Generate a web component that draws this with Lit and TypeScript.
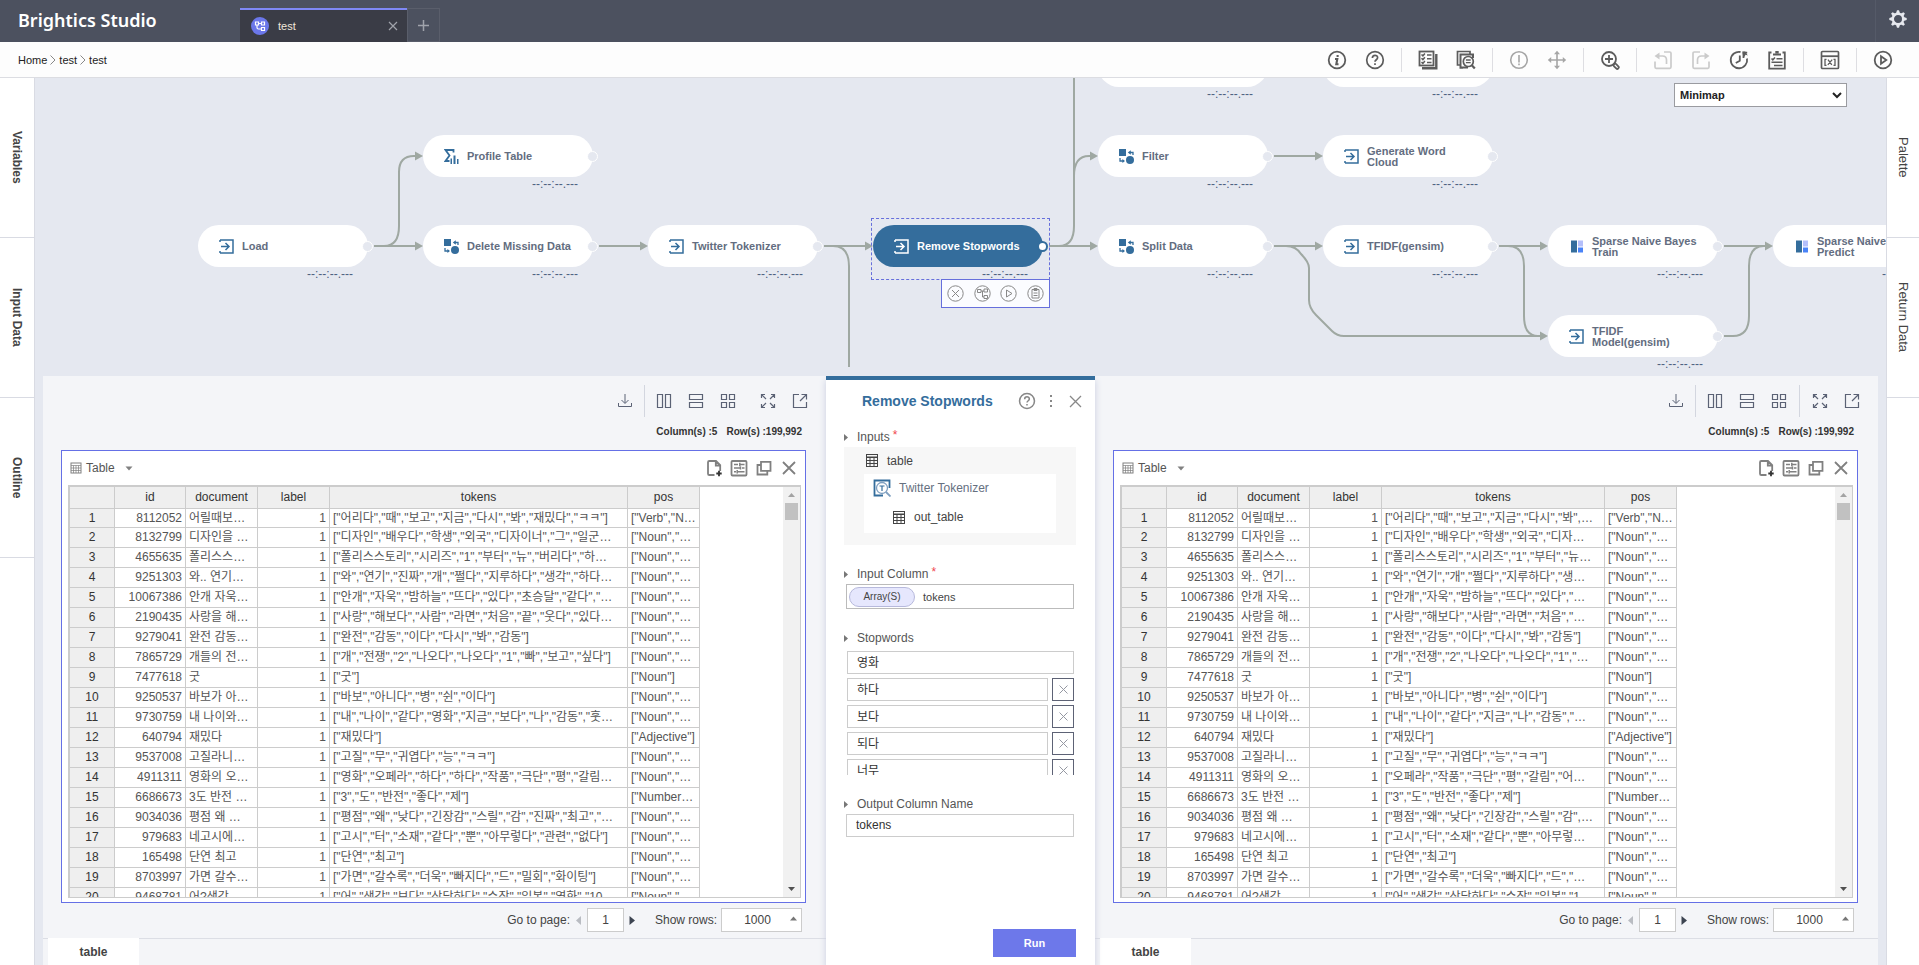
import { LitElement, html, svg, css } from "lit";
import { customElement, property } from "lit/decorators.js";
import { classMap } from "lit/directives/class-map.js";

const base = css`
  *, *::before, *::after { box-sizing: border-box; }
  button, input, select { font: inherit; color: inherit; margin: 0; padding: 0; border: 0; background: none; border-radius: 0; }
  button { cursor: pointer; display: inline-flex; align-items: center; justify-content: center; }
  svg { display: block; flex: none; }
`;

const line = "fill:none;stroke:currentColor";

const icons = {
  info: svg`<g fill="none" stroke="currentColor" stroke-width="1.8"><circle cx="10" cy="10" r="8.3"/><path d="M10.6 5v2M8 9h2.3l-1 5.2h2.2" stroke-width="2.1"/></g>`,
  help: svg`<g fill="none" stroke="currentColor" stroke-width="1.7"><circle cx="10" cy="10" r="8.3"/><path d="M7.4 8c0-3.6 5.3-3.4 5.2-.2 0 1.9-2.6 2-2.6 4M10 13.2v1.8"/></g>`,
  checklist: svg`<g fill="none" stroke="currentColor" stroke-width="1.8"><rect x="1.5" y="1.5" width="14" height="14"/><path d="M4 18.3h14.3V4" stroke-width="2.4"/><path d="M3.5 4.5l1.4 1.3 2-2.3M3.5 8.3l1.4 1.3 2-2.3M3.5 12.1l1.4 1.3 2-2.3M9 5h4.500M9 8.800h4.500M9 12.600h4.500" stroke-width="1.5"/></g>`,
  search: svg`<g fill="none" stroke="currentColor" stroke-width="1.7"><path d="M4 15H1.500V1.500H14V4"/><path d="M7 17.800H4.500V4.500H17V8M4.500 17.500H12" stroke-width="2"/><circle cx="12.300" cy="11.500" r="5"/><path d="M15.800 15.200l3 3.300" stroke-width="2.200"/><path d="M9.900 10h4.800M9.900 12.600h4.800" stroke-width="1.400"/></g>`,
  alert: svg`<g fill="none" stroke="currentColor" stroke-width="1.600"><circle cx="10" cy="10" r="8.300"/><path d="M10 5v7.600M10 13.600v1.600"/></g>`,
  move: svg`<g fill="none" stroke="currentColor" stroke-width="1.600"><path d="M10 2v16M2 10h16"/></g><path fill="currentColor" d="M10 .8l3 3.400H7zM10 19.200l3-3.400H7zM.8 10l3.400-3v6zM19.200 10l-3.400-3v6z"/>`,
  zoom: svg`<g fill="none" stroke="currentColor" stroke-width="1.800"><circle cx="9" cy="9" r="7"/><path d="M5 9h8M9 5v8"/><rect x="13.200" y="14.800" width="6" height="3" rx="1.500" transform="rotate(45 16.200 16.300)"/></g>`,
  undo: svg`<g fill="none" stroke="currentColor" stroke-width="1.700"><path d="M2 11.500v5.600q0 1.200 1.200 1.200h13.600q1.200 0 1.200-1.200V3.200Q18 2 16.800 2H11"/><path d="M4 6h5.500q4 0 4 4v4"/></g><path fill="currentColor" d="M1.500 6L6.500 2.400v7.200z"/>`,
  redo: svg`<g fill="none" stroke="currentColor" stroke-width="1.700"><path d="M18 11.500v5.600q0 1.200-1.200 1.200H3.200Q2 18.300 2 17.100V3.200Q2 2 3.200 2H9"/><path d="M16 6h-5.500q-4 0-4 4v4"/></g><path fill="currentColor" d="M18.500 6l-5-3.600v7.200z"/>`,
  history: svg`<g fill="none" stroke="currentColor" stroke-width="1.800"><path d="M11.500 2A8.200 8.200 0 1 0 18 8.500"/><path d="M10.800 5.500v5.300l-4 2.200M14.500 8V2.600M14 2.600h4.200"/></g><path fill="currentColor" d="M13.200 1.400h3l2.600 4-2.200-.6-2 3z"/>`,
  clipboard: svg`<g fill="none" stroke="currentColor" stroke-width="1.800"><path d="M4.500 2.500H2.200v16.200h15.600V2.500h-2.300"/><path d="M6 4.500h8" stroke-width="2"/><path d="M8.300 2.300h3.400" stroke-width="2.600"/><path d="M4.500 8.500l1.300 1.300 2.200-2.400M9.500 8.800h6M4.500 12.200h11M7 15.500h8.500" stroke-width="1.500"/></g>`,
  variable: svg`<g fill="none" stroke="currentColor" stroke-width="1.700"><rect x="1.500" y="1.500" width="17" height="17" rx="1"/><path d="M1.500 6.200h17" stroke-width="1.800"/><path d="M6.500 9.300H5v6h1.500M13.500 9.300H15v6h-1.500M8 9.700l3.800 5.200M12.200 9.700L7.800 14.900" stroke-width="1.300"/></g>`,
  play: svg`<g fill="none" stroke="currentColor" stroke-width="1.800"><circle cx="10" cy="10" r="8.300"/><path d="M8 6.200v7.600l5.300-3.800z"/></g>`,
};

const toolIcons = {
  download: svg`<path style=${line} d="M2.5 11v3.500h13V11M9 2v9M5.500 8L9 11.500 12.500 8"/>`,
  cols: svg`<path style=${line} d="M2.500 2.500h5v13h-5zM10.500 2.500h5v13h-5z" stroke-width="1.200"/>`,
  rows: svg`<path style=${line} d="M2.500 2.500h13v5h-13zM2.500 10.500h13v5h-13z" stroke-width="1.200"/>`,
  grid: svg`<path style=${line} d="M2.500 2.500h5v5h-5zM10.500 2.500h5v5h-5zM2.500 10.500h5v5h-5zM10.500 10.500h5v5h-5z" stroke-width="1.200"/>`,
  expand: svg`<path style=${line} d="M7 7L2.500 2.500M2.500 6V2.500H6M11 7l4.500-4.500M12 2.500h3.500V6M7 11l-4.500 4.500M2.500 12v3.500H6M11 11l4.500 4.500M15.500 12v3.500H12" stroke-width="1.200"/>`,
  popout: svg`<path style=${line} d="M8 2.500H2.500v13h13V10M9 9l6.500-6.500M10.500 2.500h5v5" stroke-width="1.200"/>`,
};

const glyphSheet = svg`<g fill="none" stroke="currentColor"><rect x="1" y="1" width="10" height="10"/><path d="M1 3.500h10M1 6h10M1 8.500h10M3.500 3.500V11M6 3.500V11M8.500 3.500V11" stroke-width=".7"/></g>`;
const glyphTable = svg`<rect x=".5" y=".5" width="11" height="12" fill="none" stroke="currentColor"/><path fill="none" stroke="currentColor" d="M1 3.500h10M1 6.500h10M1 9.500h10M4 3.500V12M8 3.500V12"/><path fill="currentColor" d="M.5 2.500h11v1.500H.5z"/>`;

type Row = [string, string, string, string];

const shared: [string, string, string][] = [
  ["8112052", "어릴때보…", '["Verb","N…'],
  ["8132799", "디자인을 …", '["Noun","…'],
  ["4655635", "폴리스스…", '["Noun","…'],
  ["9251303", "와.. 연기…", '["Noun","…'],
  ["10067386", "안개 자욱…", '["Noun","…'],
  ["2190435", "사랑을 해…", '["Noun","…'],
  ["9279041", "완전 감동…", '["Noun","…'],
  ["7865729", "개들의 전…", '["Noun","…'],
  ["7477618", "굿", '["Noun"]'],
  ["9250537", "바보가 아…", '["Noun","…'],
  ["9730759", "내 나이와…", '["Noun","…'],
  ["640794", "재밌다", '["Adjective"]'],
  ["9537008", "고질라니…", '["Noun","…'],
  ["4911311", "영화의 오…", '["Noun","…'],
  ["6686673", "3도 반전 …", '["Number…'],
  ["9034036", "평점 왜 …", '["Noun","…'],
  ["979683", "네고시에…", '["Noun","…'],
  ["165498", "단연 최고", '["Noun","…'],
  ["8703997", "가면 갈수…", '["Noun","…'],
  ["9468781", "어?생각…", '["Noun","…'],
];

const inputTokens = [
  '["어리다","때","보고","지금","다시","봐","재밌다","ㅋㅋ"]',
  '["디자인","배우다","학생","외국","디자이너","그","일군…',
  '["폴리스스토리","시리즈","1","부터","뉴","버리다","하…',
  '["와","연기","진짜","개","쩔다","지루하다","생각","하다…',
  '["안개","자욱","밤하늘","뜨다","있다","초승달","같다","…',
  '["사랑","해보다","사람","라면","처음","끝","웃다","있다…',
  '["완전","감동","이다","다시","봐","감동"]',
  '["개","전쟁","2","나오다","나오다","1","빠","보고","싶다"]',
  '["굿"]',
  '["바보","아니다","병","쉰","이다"]',
  '["내","나이","같다","영화","지금","보다","나","감동","훗…',
  '["재밌다"]',
  '["고질","무","귀엽다","능","ㅋㅋ"]',
  '["영화","오페라","하다","하다","작품","극단","평","갈림…',
  '["3","도","반전","좋다","제"]',
  '["평점","왜","낮다","긴장감","스릴","감","진짜","최고","…',
  '["고시","터","소재","같다","뿐","아무렇다","관련","없다"]',
  '["단연","최고"]',
  '["가면","갈수록","더욱","빠지다","드","밀회","화이팅"]',
  '["어","생각","보다","상당하다","수작","일본","영화","10…',
];

const outputTokens = [
  '["어리다","때","보고","지금","다시","봐",…',
  '["디자인","배우다","학생","외국","디자…',
  '["폴리스스토리","시리즈","1","부터","뉴…',
  '["와","연기","개","쩔다","지루하다","생…',
  '["안개","자욱","밤하늘","뜨다","있다","…',
  '["사랑","해보다","사람","라면","처음","…',
  '["완전","감동","이다","다시","봐","감동"]',
  '["개","전쟁","2","나오다","나오다","1","…',
  '["굿"]',
  '["바보","아니다","병","쉰","이다"]',
  '["내","나이","같다","지금","나","감동","…',
  '["재밌다"]',
  '["고질","무","귀엽다","능","ㅋㅋ"]',
  '["오페라","작품","극단","평","갈림","어…',
  '["3","도","반전","좋다","제"]',
  '["평점","왜","낮다","긴장감","스릴","감",…',
  '["고시","터","소재","같다","뿐","아무렇…',
  '["단연","최고"]',
  '["가면","갈수록","더욱","빠지다","드","…',
  '["어","생각","상당하다","수작","일본","1…',
];

const toRows = (tokens: string[]): Row[] => shared.map(([id, doc, pos], i) => [id, doc, tokens[i], pos]);

@customElement("data-panel")
export class DataPanel extends LitElement {
  @property({ attribute: false }) rows: Row[] = [];
  @property({ type: Boolean }) narrow = false;

  static styles = [
    base,
    css`
      :host { display: flex; flex-direction: column; min-width: 0; min-height: 0; background: #f4f5f8; color: #444; }
      .tools { display: flex; justify-content: flex-end; align-items: center; height: 50px; padding-right: 10px; color: #5b6275; }
      .tools button { width: 32px; height: 32px; }
      .sep { width: 1px; height: 32px; background: #d3d6df; margin: 0 4px; }
      .first { margin: 0 3px; }
      .gap { width: 8px; }
      .counts { display: flex; justify-content: flex-end; gap: 9px; height: 12px; line-height: 12px; padding-right: 24px; font-size: 10px; font-weight: 700; color: #333; }
      .card { flex: 1; min-height: 0; display: flex; flex-direction: column; margin: 12px 20px 0 18px; border: 1px solid #6570e6; background: #fff; padding: 0 4px 4px 6px; }
      .head { display: flex; align-items: center; height: 34px; padding-left: 2px; color: #808080; }
      .kind { display: flex; align-items: center; gap: 4px; color: #808080; }
      .kind span { color: #555; margin-right: 6px; }
      .spacer { flex: 1; }
      .head .act { width: 25px; height: 25px; }
      .grid { flex: 1; min-height: 0; display: flex; justify-content: space-between; overflow: hidden; border: 1px solid #ccc; border-width: 2px 1px 1px 2px; }
      table { table-layout: fixed; border-collapse: separate; border-spacing: 0; width: 630px; height: 0; }
      table.narrow { width: 555px; }
      .c0 { width: 45px; }
      .c1 { width: 71px; }
      .c2, .c3, .c5 { width: 72px; }
      th, td { border-right: 1px solid #ccc; border-bottom: 1px solid #ccc; padding: 0 3px; height: 20px; line-height: 19px; font-weight: 400; white-space: nowrap; overflow: hidden; }
      thead th { height: 22px; line-height: 21px; }
      tbody tr:first-child > * { height: 19px; line-height: 18px; }
      th { background: #efefef; color: #333; text-align: center; }
      td { color: #555; }
      td.num { text-align: right; }
      .bar { width: 17px; display: flex; flex-direction: column; align-items: center; background: #f1f1f1; }
      .arrow { height: 16px; display: flex; align-items: center; color: #a3a3a3; }
      .thumb { width: 13px; height: 17px; background: #c1c1c1; }
      .arrow.down { margin-top: auto; color: #505050; }
      .pager { display: flex; justify-content: flex-end; align-items: center; height: 35px; padding: 0 24px 1px 0; }
      .pager label { line-height: 24px; }
      .page { width: 37px; height: 24px; border: 1px solid #ccc; background: #fff; text-align: center; }
      .pager button { height: 24px; }
      .prev { width: 17px; color: #b9bcc2; }
      .next { width: 17px; margin-right: 14px; color: #3d4451; }
      .pick { position: relative; margin-left: 4px; }
      .pick select { display: block; appearance: none; width: 81px; height: 24px; border: 1px solid #ccc; background: #fff; text-align: center; text-align-last: center; padding-right: 8px; }
      .pick svg { position: absolute; right: 5px; top: 8px; color: #777; pointer-events: none; }
      .tabs { display: flex; height: 27px; padding-left: 5px; box-shadow: inset 0 1px 0 #dcdee5; }
      .tabs button { width: 91px; background: #fff; font-weight: 700; }
    `,
  ];

  private tool(label: string, glyph: unknown) {
    return html`<button aria-label=${label}><svg width="18" height="18" viewBox="0 0 18 18">${glyph}</svg></button>`;
  }

  render() {
    return html`
      <div class="tools">
        ${this.tool("Download", toolIcons.download)}
        <span class="sep first"></span>
        ${this.tool("Split columns", toolIcons.cols)} ${this.tool("Split rows", toolIcons.rows)} ${this.tool("Split grid", toolIcons.grid)}
        ${this.narrow ? html`<span class="sep"></span>` : html`<span class="gap"></span>`}
        ${this.tool("Expand", toolIcons.expand)} ${this.tool("Pop out", toolIcons.popout)}
      </div>
      <div class="counts"><span>Column(s) :5</span><span>Row(s) :199,992</span></div>
      <section class="card">
        <div class="head">
          <button class="kind">
            <svg width="12" height="12" viewBox="0 0 12 12">${glyphSheet}</svg>
            <span>Table</span>
            <svg width="8" height="5" viewBox="0 0 8 5"><path fill="currentColor" d="M.5.5h7L4 4.500z"/></svg>
          </button>
          <span class="spacer"></span>
          <button class="act" aria-label="Add report"><svg width="18" height="18" viewBox="0 0 18 18"><path style=${line} stroke-width="1.800" d="M9.500 16H4.300Q3 16 3 14.700V3.300Q3 2 4.300 2H11l4.200 4.200V12M10.800 2.200V6.500H15"/><path stroke="#333" stroke-width="1.800" d="M14 11.800v5.400M11.300 14.500h5.400"/></svg></button>
          <button class="act" aria-label="Settings"><svg width="18" height="18" viewBox="0 0 18 18"><rect x="1.500" y="2" width="15" height="14.500" rx="1" style=${line} stroke-width="1.800"/><path style=${line} stroke-width="1.500" d="M4 5.500h4M10 5.500h4.500M4 9h6M12 9h2.500M4 12.800h2M8 12.800h6.500M9.800 3.800v3.400M10.500 7.500v3M7.200 11v3.500"/></svg></button>
          <button class="act" aria-label="Copy"><svg width="18" height="18" viewBox="0 0 18 18"><path style=${line} stroke-width="1.800" d="M6 2.800h9.500v9H6zM6 6H2.500v9.500h9.800v-3.500"/></svg></button>
          <button class="act" aria-label="Close"><svg width="14" height="14" viewBox="0 0 14 14"><path style=${line} stroke-width="1.800" d="M1 1l12 12M13 1L1 13"/></svg></button>
        </div>
        <div class="grid">
          <table class=${classMap({ narrow: this.narrow })}>
            <colgroup><col class="c0" /><col class="c1" /><col class="c2" /><col class="c3" /><col /><col class="c5" /></colgroup>
            <thead>
              <tr><th></th><th>id</th><th>document</th><th>label</th><th>tokens</th><th>pos</th></tr>
            </thead>
            <tbody>
              ${this.rows.map(
                ([id, doc, tokens, pos], i) => html`<tr><th>${i + 1}</th><td class="num">${id}</td><td>${doc}</td><td class="num">1</td><td>${tokens}</td><td>${pos}</td></tr>`
              )}
            </tbody>
          </table>
          <div class="bar" aria-hidden="true">
            <span class="arrow"><svg width="7" height="4" viewBox="0 0 7 4"><path fill="currentColor" d="M0 4h7L3.500 0z"/></svg></span>
            <span class="thumb"></span>
            <span class="arrow down"><svg width="7" height="4" viewBox="0 0 7 4"><path fill="currentColor" d="M0 0h7L3.500 4z"/></svg></span>
          </div>
        </div>
      </section>
      <div class="pager">
        <label for="page">Go to page:</label>
        <button class="prev" aria-label="Previous page"><svg width="5" height="9" viewBox="0 0 5 9"><path fill="currentColor" d="M5 0v9L0 4.500z"/></svg></button>
        <input class="page" id="page" value="1" />
        <button class="next" aria-label="Next page"><svg width="6" height="9" viewBox="0 0 6 9"><path fill="currentColor" d="M.5 0v9L6 4.500z"/></svg></button>
        <label for="rows">Show rows:</label>
        <span class="pick">
          <select id="rows"><option>1000</option></select>
          <svg width="7" height="5" viewBox="0 0 7 5"><path fill="currentColor" d="M0 4.500h7L3.500.5z"/></svg>
        </span>
      </div>
      <div class="tabs"><button>table</button></div>
    `;
  }
}

@customElement("config-panel")
export class ConfigPanel extends LitElement {
  static styles = [
    base,
    css`
      :host { position: relative; z-index: 1; display: flex; flex-direction: column; min-height: 0; background: #fff; border-top: 4px solid #346d9c; box-shadow: 0 4px 7px #c9cee0; clip-path: inset(0 -10px 0 -10px); color: #444; }
      header { display: flex; align-items: center; height: 42px; padding: 0 8px 0 36px; color: #888; }
      h2 { flex: 1; margin: 0; font-size: 14px; line-height: 20px; color: #346d9c; white-space: nowrap; }
      header button { width: 24px; height: 24px; }
      .body { flex: 1; min-height: 0; display: flex; flex-direction: column; padding: 5px 19px 8px 18px; }
      section { margin-bottom: 19px; }
      .label { display: flex; align-items: center; height: 20px; gap: 9px; color: #555; }
      .label svg { color: #777; }
      .req { color: #f0484f; align-self: flex-start; margin-left: -6px; font-size: 12px; line-height: 16px; }
      .source { background: #f7f7f7; padding: 0 20px 12px; color: #444; }
      .entry { display: flex; align-items: center; gap: 9px; height: 27px; padding-left: 2px; }
      .inner { background: #fff; height: 59px; padding-left: 9px; }
      .entry.fn { color: #66707f; padding: 0; gap: 8px; }
      .entry.out { padding: 0 0 0 20px; height: 32px; }
      .field { display: flex; align-items: center; margin: 0 2px; border: 1px solid #bbb; height: 25px; background: #fff; padding: 0 2px; font-size: 11px; }
      .pill { width: 66px; height: 20px; display: flex; align-items: center; justify-content: center; margin-right: 8px; border: 1px solid #b7b9dc; border-radius: 10px; background: #e6e7fd; font-size: 10px; }
      .list { height: 127px; overflow: hidden; display: flex; flex-direction: column; gap: 4px; padding: 3px 2px 0 3px; }
      .item { display: flex; gap: 4px; flex: none; }
      input { flex: 1; min-width: 0; height: 23px; border: 1px solid #ccc; background: #fff; padding: 0 9px 2px; color: #333; }
      .item button { width: 22px; height: 23px; border: 1px solid #5d6275; color: #9598a2; }
      .single { display: flex; margin: 0 2px; }
      .run { align-self: flex-end; margin-top: auto; width: 83px; height: 28px; background: #6d78ea; color: #fff; font-size: 11px; font-weight: 700; }
    `,
  ];

  private marker = html`<svg width="4" height="7" viewBox="0 0 4 7"><path fill="currentColor" d="M0 0v7l4-3.500z"/></svg>`;

  render() {
    const words = ["하다", "보다", "되다", "너무"];
    return html`
      <header>
        <h2>Remove Stopwords</h2>
        <button aria-label="Help"><svg width="18" height="18" viewBox="0 0 20 20">${icons.help}</svg></button>
        <button aria-label="More"><svg width="4" height="14" viewBox="0 0 4 14"><path fill="currentColor" d="M1 1h2v2H1zM1 6h2v2H1zM1 11h2v2H1z"/></svg></button>
        <button aria-label="Close"><svg width="13" height="13" viewBox="0 0 13 13"><path style=${line} stroke-width="1.300" d="M1 1l11 11M12 1L1 12"/></svg></button>
      </header>
      <div class="body">
        <section>
          <div class="label">${this.marker}<span>Inputs</span><span class="req">*</span></div>
          <div class="source">
            <div class="entry"><svg width="12" height="13" viewBox="0 0 12 13">${glyphTable}</svg>table</div>
            <div class="inner">
              <div class="entry fn">
                <svg width="18" height="18" viewBox="0 0 18 18"><path fill="none" stroke="#346d9c" stroke-width="1.800" d="M16.500 9V1.500h-15v15H10"/><circle cx="9" cy="9" r="5.500" fill="none" stroke="#7f9fc0" stroke-width="1.300"/><path fill="none" stroke="#346d9c" stroke-width="1.200" d="M6.500 7h5M9 7v5"/><path stroke="#7f9fc0" stroke-width="1.800" d="M13 13l4.500 4.500"/></svg>
                Twitter Tokenizer
              </div>
              <div class="entry out"><svg width="12" height="13" viewBox="0 0 12 13">${glyphTable}</svg>out_table</div>
            </div>
          </div>
        </section>
        <section>
          <div class="label">${this.marker}<span>Input Column</span><span class="req">*</span></div>
          <div class="field"><span class="pill">Array(S)</span>tokens</div>
        </section>
        <section>
          <label class="label" for="word">${this.marker}Stopwords</label>
          <div class="list">
            <div class="item"><input id="word" value="영화" /></div>
            ${words.map(
              (w) => html`<div class="item"><input aria-label="Stopword" value=${w} /><button aria-label="Remove"><svg width="9" height="9" viewBox="0 0 9 9"><path style=${line} d="M.5.5l8 8M8.500.5l-8 8"/></svg></button></div>`
            )}
          </div>
        </section>
        <section>
          <label class="label" for="out">${this.marker}Output Column Name</label>
          <div class="single"><input id="out" value="tokens" /></div>
        </section>
        <button class="run">Run</button>
      </div>
    `;
  }
}

type Kind = "step" | "shape" | "stats" | "model";
interface FlowNode { col: number; row: number; kind: Kind; text: string[]; selected?: boolean; }

const flow: FlowNode[] = [
  { col: 4, row: -1, kind: "shape", text: [] },
  { col: 5, row: -1, kind: "shape", text: [] },
  { col: 1, row: 0, kind: "stats", text: ["Profile Table"] },
  { col: 4, row: 0, kind: "shape", text: ["Filter"] },
  { col: 5, row: 0, kind: "step", text: ["Generate Word", "Cloud"] },
  { col: 0, row: 1, kind: "step", text: ["Load"] },
  { col: 1, row: 1, kind: "shape", text: ["Delete Missing Data"] },
  { col: 2, row: 1, kind: "step", text: ["Twitter Tokenizer"] },
  { col: 3, row: 1, kind: "step", text: ["Remove Stopwords"], selected: true },
  { col: 4, row: 1, kind: "shape", text: ["Split Data"] },
  { col: 5, row: 1, kind: "step", text: ["TFIDF(gensim)"] },
  { col: 6, row: 1, kind: "model", text: ["Sparse Naive Bayes", "Train"] },
  { col: 7, row: 1, kind: "model", text: ["Sparse Naive Bayes", "Predict"] },
  { col: 6, row: 2, kind: "step", text: ["TFIDF", "Model(gensim)"] },
];

const kindIcons: Record<Kind, unknown> = {
  step: svg`<path fill="none" stroke="currentColor" stroke-width="1.500" d="M1 1h13v13H1M1 1v2M1 12v2M2 7.500h7.500M6.500 4l3.500 3.500L6.500 11"/>`,
  shape: svg`<path fill="currentColor" d="M0 0h7v7H0z"/><circle cx="11" cy="11" r="4" fill="currentColor"/><path fill="none" stroke="currentColor" stroke-width="1.300" d="M14 6V3.500h-3.500M1 9v3h4"/><path fill="currentColor" d="M8.800 3.500l3-2.200v4.400zM6 12l-2.600-2v4z"/>`,
  stats: svg`<path fill="none" stroke="currentColor" stroke-width="1.800" d="M9.500 3.500V1H1.500l4 5.500-4 5.500h4"/><path fill="currentColor" d="M6.500 9.500H8V15H6.500zM9.500 6.500h2V15h-2zM13 10h1.500v5H13z"/>`,
  model: svg`<path fill="#346d9c" d="M2 1.500h6v12H2z"/><path fill="#b4bffb" d="M9 1.500h5v6H9z"/><path fill="#4a83f7" d="M9 8.500h5v5H9z"/>`,
};

const wires = [
  "M374 246H416", "M384 246Q399 246 399 226V172Q399 156 414 156H416",
  "M599 246H641", "M824 246H866", "M833 246Q849 246 849 266V367",
  "M1049 246H1091", "M1059 246Q1074 246 1074 226V78", "M1074 176Q1074 156 1089 156H1091",
  "M1274 156H1316", "M1274 246H1316", "M1281 246H1286Q1296 246 1301 254 1309 262 1309 268V300Q1309 308 1316 315L1332 331Q1337 336 1344 336H1541",
  "M1499 246H1541", "M1508 246Q1524 246 1524 266V316Q1524 336 1538 336",
  "M1724 246H1766", "M1724 336H1733Q1749 336 1749 316V266Q1749 246 1764 246",
];
const heads = [[424, 246], [424, 156], [649, 246], [874, 246], [1099, 246], [1099, 156], [1324, 156], [1324, 246], [1549, 336], [1549, 246], [1774, 246]];

@customElement("flow-canvas")
export class FlowCanvas extends LitElement {
  static styles = [
    base,
    css`
      :host { position: relative; display: block; overflow: hidden; }
      .wires { position: absolute; inset: 0; width: 100%; height: 100%; }
      .node { position: absolute; width: 170px; height: 42px; display: flex; align-items: center; gap: 8px; padding-left: 21px; border-radius: 21px; background: #fff; color: #346d9c; font-size: 11px; font-weight: 700; line-height: 11px; }
      .text { color: #636d80; white-space: nowrap; padding-top: 1px; }
      .port { position: absolute; right: -5px; top: 16px; width: 11px; height: 11px; border: 1px solid #fff; border-radius: 50%; background: #e5e8f0; }
      .time { position: absolute; right: 15px; top: 43px; font-size: 12px; font-weight: 400; line-height: 12px; color: #4d6080; }
      .on { background: #346d9c; color: #fff; }
      .on .text { color: #fff; }
      .on .port { border: 2px solid #346d9c; background: #fff; }
      .frame { position: absolute; left: 836px; top: 140px; width: 179px; height: 62px; border: 1px dashed #666fdc; }
      .menu { position: absolute; left: 906px; top: 201px; width: 109px; height: 29px; display: flex; justify-content: center; align-items: center; border: 1px solid #666fdc; background: #fbfcff; color: #888; }
      .menu button { flex: 1; }
      .map { position: absolute; right: 39px; top: 5px; width: 173px; height: 24px; }
      .map select { appearance: none; width: 100%; height: 100%; border: 1px dashed #222; background: #fff; padding: 0 5px; font-size: 11px; font-weight: 700; color: #222; outline: 1px solid #9a9ba0; outline-offset: -1px; }
      .map svg { position: absolute; right: 5px; top: 9px; pointer-events: none; }
    `,
  ];

  render() {
    const ring = svg`<circle cx="8.500" cy="8.500" r="7.700" style=${line}/>`;
    return html`
      <svg class="wires">
        <g transform="translate(-35 -78)">
          ${wires.map((d) => svg`<path d=${d} fill="none" stroke="#9fa8a2" stroke-width="2"/>`)}
          ${heads.map(([x, y]) => svg`<path d=${`M${x - 9} ${y - 4.5}L${x - 1} ${y}L${x - 9} ${y + 4.5}z`} fill="#9fa8a2"/>`)}
        </g>
      </svg>
      <div class="frame"></div>
      ${flow.map(
        (n) => html`
          <div class=${classMap({ node: true, on: !!n.selected })} style=${`left:${163 + n.col * 225}px;top:${57 + n.row * 90}px`}>
            <svg width="15" height="15" viewBox="0 0 15 15">${kindIcons[n.kind]}</svg>
            <span class="text">${n.text.map((t, i) => (i ? html`<br />${t}` : t))}</span>
            <span class="port"></span>
            <span class="time">--:--:--.---</span>
          </div>
        `
      )}
      <div class="menu">
        <button aria-label="Delete"><svg width="17" height="17" viewBox="0 0 17 17">${ring}<path style=${line} d="M5 5l7 7M12 5l-7 7"/></svg></button>
        <button aria-label="Connect"><svg width="17" height="17" viewBox="0 0 17 17">${ring}<path style=${line} d="M3.500 4.500h3.500v3H3.500zM10 4h3.500v3H10zM10 10.500h3.500v3H10zM7 6h3M8.500 6v6H10"/></svg></button>
        <button aria-label="Run"><svg width="17" height="17" viewBox="0 0 17 17">${ring}<path style=${line} d="M6.500 5v7l5.500-3.500z"/></svg></button>
        <button aria-label="Report"><svg width="17" height="17" viewBox="0 0 17 17">${ring}<path style=${line} d="M5 4.500h7v8.500H5zM7 3.500h3v2H7zM6.500 8h4M6.500 10.500h4"/></svg></button>
      </div>
      <div class="map">
        <select aria-label="Canvas view"><option>Minimap</option></select>
        <svg width="10" height="7" viewBox="0 0 10 7"><path fill="none" stroke="#222" stroke-width="2" d="M1 1l4 4 4-4"/></svg>
      </div>
    `;
  }
}

@customElement("app-root")
export class AppRoot extends LitElement {
  static styles = [
    base,
    css`
      :host { display: flex; flex-direction: column; height: 100vh; overflow: hidden; font-family: "Liberation Sans", Arial, "Noto Sans CJK KR", sans-serif; font-size: 12px; color: #333; background: #e5e8f0; }
      .top { display: flex; align-items: flex-end; height: 42px; flex: none; background: #4c515f; color: #fff; }
      .logo { width: 240px; align-self: center; padding: 0 0 3px 18px; font-family: "Noto Sans", sans-serif; font-size: 18px; line-height: 24px; font-weight: 600; }
      .tab { display: flex; align-items: center; width: 167px; height: 34px; padding: 0 9px 0 11px; border-top: 2px solid #7f88f5; background: #3a3c46; font-size: 11px; color: #f2e8dc; }
      .tab span { flex: 1; padding-left: 9px; }
      .add { width: 33px; height: 34px; border: 1px solid #5a5e6b; color: #a0a3ab; }
      .gear { margin-left: auto; width: 44px; height: 42px; border-left: 1px solid #555a68; padding-bottom: 5px; color: #e6e8ee; }
      .sub { display: flex; align-items: center; height: 36px; flex: none; padding: 0 17px 0 18px; background: #fdfdfd; border-bottom: 1px solid #dcdde2; }
      nav { display: flex; align-items: center; flex: 1; font-size: 11px; color: #888; }
      nav a { color: #222; text-decoration: none; }
      nav svg { margin: 0 3px; }
      .sub button { width: 38px; height: 34px; color: #5c5c5c; }
      .sub .dim { color: #a6a6a6; }
      .sub .off { color: #cbcbcb; }
      .sep { width: 1px; height: 24px; background: #dedee2; margin: 0 7px; }
      .main { flex: 1; min-height: 0; display: grid; grid-template-columns: 35px minmax(0, 1fr) 33px; }
      aside { background: #fff; border-right: 1px solid #d9dbe3; }
      aside.right { border: 0; border-left: 1px solid #d9dbe3; }
      aside button { display: flex; width: 100%; height: 160px; border-bottom: 1px solid #d9dbe3; writing-mode: vertical-rl; font-weight: 700; color: #444; }
      aside.right button { font-weight: 400; font-size: 13px; }
      .work { display: grid; grid-template-rows: 298px minmax(0, 1fr); min-height: 0; }
      .panels { display: grid; grid-template-columns: minmax(0, 1fr) 269px minmax(0, 1fr); min-height: 0; padding: 0 8px; }
    `,
  ];

  private tool(label: string, glyph: unknown, cls = "") {
    return html`<button class=${cls} aria-label=${label}><svg width="20" height="20" viewBox="0 0 20 20">${glyph}</svg></button>`;
  }

  render() {
    const chevron = html`<svg width="6" height="10" viewBox="0 0 6 10"><path style=${line} d="M.5.5L5 5 .5 9.500"/></svg>`;
    const sep = html`<span class="sep"></span>`;
    return html`
      <header class="top">
        <div class="logo">Brightics Studio</div>
        <div class="tab">
          <svg width="18" height="18" viewBox="0 0 18 18"><circle cx="9" cy="9" r="9" fill="#6b77ea"/><path fill="none" stroke="#fff" stroke-width="1.200" d="M4.500 5h3v3h-3zM10.500 5h3v3h-3zM10.500 10.500h3v3h-3zM7.500 6.500h3M6 8v2.500Q6 12 7.500 12h3"/></svg>
          <span>test</span>
          <button aria-label="Close tab"><svg width="10" height="10" viewBox="0 0 10 10"><path stroke="#a0a3ab" stroke-width="1.200" d="M1 1l8 8M9 1L1 9"/></svg></button>
        </div>
        <button class="add" aria-label="New tab"><svg width="11" height="11" viewBox="0 0 11 11"><path stroke="currentColor" stroke-width="1.500" d="M5.500 0v11M0 5.500h11"/></svg></button>
        <button class="gear" aria-label="Settings"><svg width="18" height="18" viewBox="0 0 18 18"><circle cx="9" cy="9" r="5.200" style=${line} stroke-width="2.400"/>${[0, 45, 90, 135, 180, 225, 270, 315].map((a) => svg`<path fill="currentColor" transform=${`rotate(${a} 9 9)`} d="M7 3.500L8 .3h2l1 3.200z"/>`)}</svg></button>
      </header>
      <div class="sub">
        <nav><a href="#">Home</a>${chevron}<a href="#">test</a>${chevron}<a href="#">test</a></nav>
        ${this.tool("Info", icons.info)}${this.tool("Help", icons.help)}${sep}
        ${this.tool("Checklist", icons.checklist)}${this.tool("Find", icons.search)}${sep}
        ${this.tool("Problems", icons.alert, "dim")}${this.tool("Move", icons.move, "dim")}${sep}
        ${this.tool("Zoom", icons.zoom)}${sep}
        ${this.tool("Undo", icons.undo, "off")}${this.tool("Redo", icons.redo, "off")}${this.tool("History", icons.history)}${this.tool("Clipboard", icons.clipboard)}${sep}
        ${this.tool("Variables", icons.variable)}${sep}
        ${this.tool("Run", icons.play)}
      </div>
      <div class="main">
        <aside><button>Variables</button><button>Input Data</button><button>Outline</button></aside>
        <div class="work">
          <flow-canvas></flow-canvas>
          <div class="panels">
            <data-panel .rows=${toRows(inputTokens)}></data-panel>
            <config-panel></config-panel>
            <data-panel narrow .rows=${toRows(outputTokens)}></data-panel>
          </div>
        </div>
        <aside class="right"><button>Palette</button><button>Return Data</button></aside>
      </div>
    `;
  }
}
